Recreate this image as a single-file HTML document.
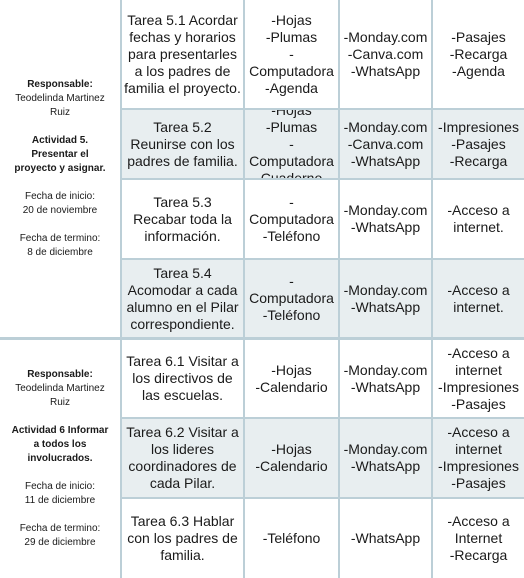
<!DOCTYPE html>
<html><head><meta charset="utf-8"><style>
body{margin:0;width:524px;height:578px;overflow:hidden;background:#fff;font-family:"Liberation Sans",Arial,sans-serif;color:#1a1a1a;position:relative}
.c{position:absolute;display:flex;align-items:center;justify-content:center;text-align:center;font-size:14px;line-height:17px;overflow:hidden}
.s{background:#e8eef0}
.l{position:absolute;left:0;width:120px;display:flex;align-items:center;justify-content:center;text-align:center;font-size:10px;line-height:14px}
.v{position:absolute;top:0;height:578px;width:2px;background:#bccfd7}
.h{position:absolute;height:2px;background:#bccfd7}
b{font-weight:bold}
</style></head><body>
<!-- shaded rows -->
<div class="s" style="position:absolute;left:122px;top:110px;width:402px;height:68px"></div>
<div class="s" style="position:absolute;left:122px;top:260px;width:402px;height:77px"></div>
<div class="s" style="position:absolute;left:122px;top:419px;width:402px;height:78px"></div>

<div class="l" style="top:0;height:337px"><div><b>Responsable:</b><br>Teodelinda Martinez<br>Ruiz<br><br><b>Actividad 5.<br>Presentar el<br>proyecto y asignar.</b><br><br>Fecha de inicio:<br>20 de noviembre<br><br>Fecha de termino:<br>8 de diciembre</div></div>
<div class="l" style="top:340px;height:238px"><div><b>Responsable:</b><br>Teodelinda Martinez<br>Ruiz<br><br><b>Actividad 6 Informar<br>a todos los<br>involucrados.</b><br><br>Fecha de inicio:<br>11 de diciembre<br><br>Fecha de termino:<br>29 de diciembre</div></div>

<!-- row 5.1 -->
<div class="c" style="left:122px;top:0;width:121px;height:108px">Tarea 5.1 Acordar<br>fechas y horarios<br>para presentarles<br>a los padres de<br>familia el proyecto.</div>
<div class="c" style="left:245px;top:0;width:93px;height:108px">-Hojas<br>-Plumas<br>-<br>Computadora<br>-Agenda</div>
<div class="c" style="left:340px;top:0;width:91px;height:108px">-Monday.com<br>-Canva.com<br>-WhatsApp</div>
<div class="c" style="left:433px;top:0;width:91px;height:108px">-Pasajes<br>-Recarga<br>-Agenda</div>
<!-- row 5.2 -->
<div class="c" style="left:122px;top:110px;width:121px;height:68px">Tarea 5.2<br>Reunirse con los<br>padres de familia.</div>
<div class="c" style="left:245px;top:110px;width:93px;height:68px"><div>-Hojas<br>-Plumas<br>-<br>Computadora<br>Cuaderno</div></div>
<div class="c" style="left:340px;top:110px;width:91px;height:68px">-Monday.com<br>-Canva.com<br>-WhatsApp</div>
<div class="c" style="left:433px;top:110px;width:91px;height:68px">-Impresiones<br>-Pasajes<br>-Recarga</div>
<!-- row 5.3 -->
<div class="c" style="left:122px;top:180px;width:121px;height:78px">Tarea 5.3<br>Recabar toda la<br>información.</div>
<div class="c" style="left:245px;top:180px;width:93px;height:78px">-<br>Computadora<br>-Teléfono</div>
<div class="c" style="left:340px;top:180px;width:91px;height:78px">-Monday.com<br>-WhatsApp</div>
<div class="c" style="left:433px;top:180px;width:91px;height:78px">-Acceso a<br>internet.</div>
<!-- row 5.4 -->
<div class="c" style="left:122px;top:260px;width:121px;height:77px">Tarea 5.4<br>Acomodar a cada<br>alumno en el Pilar<br>correspondiente.</div>
<div class="c" style="left:245px;top:260px;width:93px;height:77px">-<br>Computadora<br>-Teléfono</div>
<div class="c" style="left:340px;top:260px;width:91px;height:77px">-Monday.com<br>-WhatsApp</div>
<div class="c" style="left:433px;top:260px;width:91px;height:77px">-Acceso a<br>internet.</div>
<!-- row 6.1 -->
<div class="c" style="left:122px;top:340px;width:121px;height:77px">Tarea 6.1 Visitar a<br>los directivos de<br>las escuelas.</div>
<div class="c" style="left:245px;top:340px;width:93px;height:77px">-Hojas<br>-Calendario</div>
<div class="c" style="left:340px;top:340px;width:91px;height:77px">-Monday.com<br>-WhatsApp</div>
<div class="c" style="left:433px;top:340px;width:91px;height:77px">-Acceso a<br>internet<br>-Impresiones<br>-Pasajes</div>
<!-- row 6.2 -->
<div class="c" style="left:122px;top:419px;width:121px;height:78px">Tarea 6.2 Visitar a<br>los lideres<br>coordinadores de<br>cada Pilar.</div>
<div class="c" style="left:245px;top:419px;width:93px;height:78px">-Hojas<br>-Calendario</div>
<div class="c" style="left:340px;top:419px;width:91px;height:78px">-Monday.com<br>-WhatsApp</div>
<div class="c" style="left:433px;top:419px;width:91px;height:78px">-Acceso a<br>internet<br>-Impresiones<br>-Pasajes</div>
<!-- row 6.3 -->
<div class="c" style="left:122px;top:499px;width:121px;height:79px">Tarea 6.3 Hablar<br>con los padres de<br>familia.</div>
<div class="c" style="left:245px;top:499px;width:93px;height:79px">-Teléfono</div>
<div class="c" style="left:340px;top:499px;width:91px;height:79px">-WhatsApp</div>
<div class="c" style="left:433px;top:499px;width:91px;height:79px">-Acceso a<br>Internet<br>-Recarga</div>

<!-- lines -->
<div class="v" style="left:120px"></div>
<div class="v" style="left:243px"></div>
<div class="v" style="left:338px"></div>
<div class="v" style="left:431px"></div>
<div class="h" style="left:120px;width:404px;top:108px"></div>
<div class="h" style="left:120px;width:404px;top:178px"></div>
<div class="h" style="left:120px;width:404px;top:258px"></div>
<div class="h" style="left:0;width:524px;top:337px;height:3px"></div>
<div class="h" style="left:120px;width:404px;top:417px"></div>
<div class="h" style="left:120px;width:404px;top:497px"></div>
</body></html>
